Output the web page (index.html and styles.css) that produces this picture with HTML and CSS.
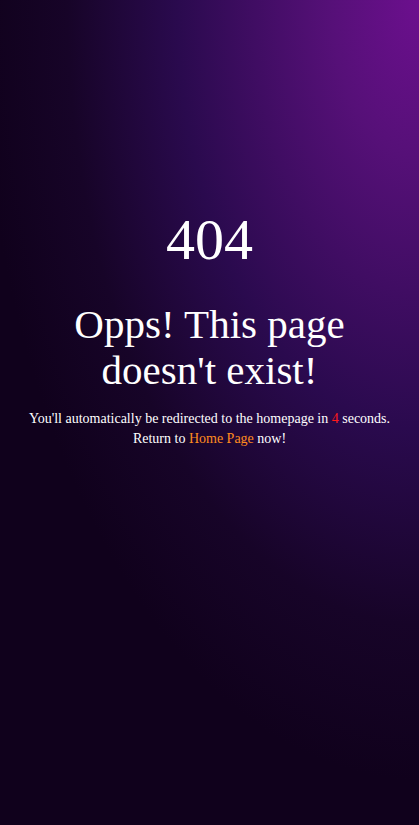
FILE: index.html
```html
<!DOCTYPE html>
<html>
<head>
<meta charset="utf-8">
<link rel="stylesheet" href="styles.css">
<title>404</title>
</head>
<body>
<main class="page">
  <div class="content">
    <h1 class="code">404</h1>
    <h2 class="title">Opps! This page doesn't exist!</h2>
    <p class="note">You'll automatically be redirected to the homepage in <span class="count">4</span> seconds.</p>
    <p class="note">Return to <a class="home" href="#">Home Page</a> now!</p>
  </div>
</main>
</body>
</html>
```
FILE: styles.css
```css
html, body {
  margin: 0;
  padding: 0;
}
body {
  font-family: "Liberation Serif", "Times New Roman", serif;
  color: #fff;
  background: #10011c;
}
.page {
  min-height: 100vh;
  box-sizing: border-box;
  padding-top: 211px;
  background: radial-gradient(ellipse 440px 780px at 100% 0%, #6c0f8e 0%, #561078 20%, #2a0a4e 55%, #170428 80%, #10011c 100%);
}
.content {
  text-align: center;
}
.code {
  font-size: 58px;
  line-height: 58px;
  font-weight: normal;
  margin: 0;
}
.title {
  font-size: 41px;
  line-height: 46px;
  font-weight: normal;
  margin: 32px 20px 16px;
}
.note {
  font-size: 14px;
  line-height: 20px;
  margin: 0;
}
.count {
  color: #ff1a1a;
}
.home {
  color: #ff8c1e;
  text-decoration: none;
}
```
